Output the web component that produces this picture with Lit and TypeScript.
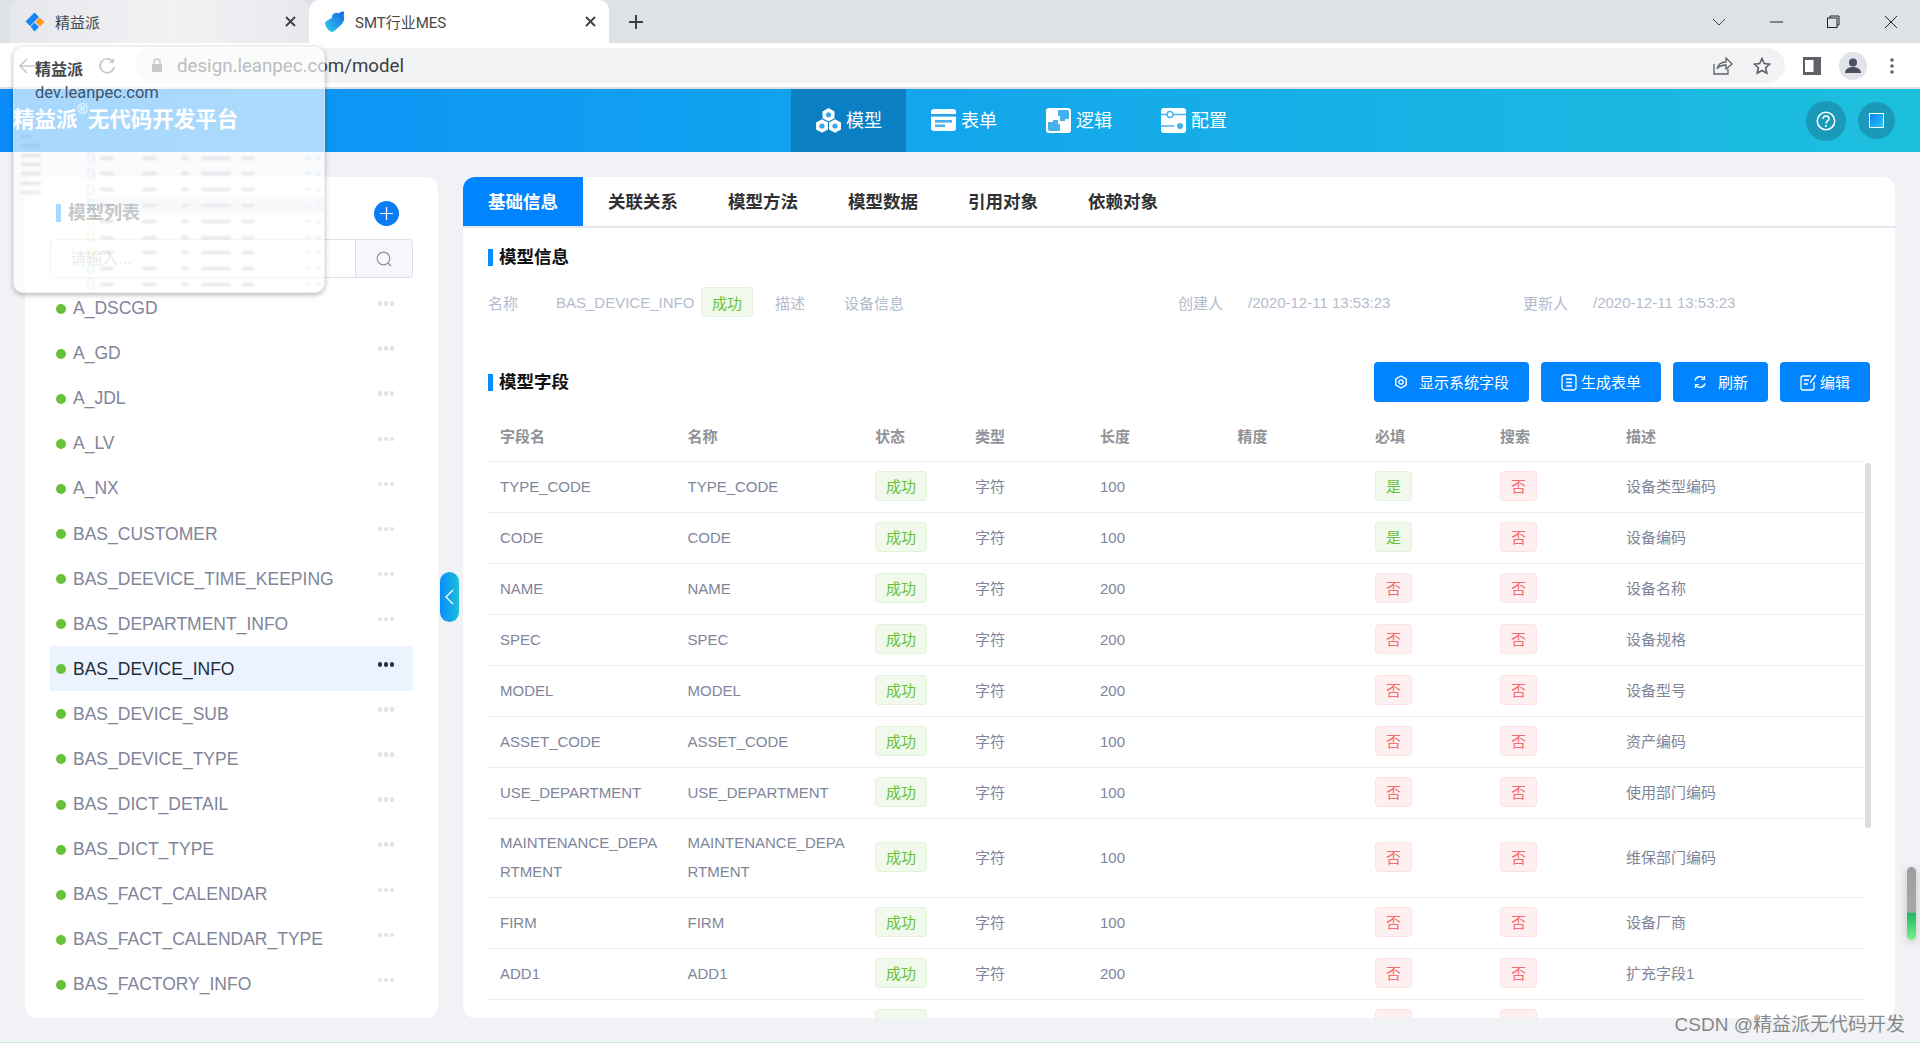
import { LitElement, html, css, svg } from "lit";
import { customElement } from "lit/decorators.js";

const MODELS = ["A_DSCGD","A_GD","A_JDL","A_LV","A_NX","BAS_CUSTOMER","BAS_DEEVICE_TIME_KEEPING","BAS_DEPARTMENT_INFO","BAS_DEVICE_INFO","BAS_DEVICE_SUB","BAS_DEVICE_TYPE","BAS_DICT_DETAIL","BAS_DICT_TYPE","BAS_FACT_CALENDAR","BAS_FACT_CALENDAR_TYPE","BAS_FACTORY_INFO"];
const SELECTED = "BAS_DEVICE_INFO";
const TABS = ["基础信息","关联关系","模型方法","模型数据","引用对象","依赖对象"];
const COLS = ["字段名","名称","状态","类型","长度","精度","必填","搜索","描述"];
type Row = [string, string, string, boolean, string];
const ROWS: Row[] = [
  ["TYPE_CODE","TYPE_CODE","100",true,"设备类型编码"],
  ["CODE","CODE","100",true,"设备编码"],
  ["NAME","NAME","200",false,"设备名称"],
  ["SPEC","SPEC","200",false,"设备规格"],
  ["MODEL","MODEL","200",false,"设备型号"],
  ["ASSET_CODE","ASSET_CODE","100",false,"资产编码"],
  ["USE_DEPARTMENT","USE_DEPARTMENT","100",false,"使用部门编码"],
  ["MAINTENANCE_DEPARTMENT","MAINTENANCE_DEPARTMENT","100",false,"维保部门编码"],
  ["FIRM","FIRM","100",false,"设备厂商"],
  ["ADD1","ADD1","200",false,"扩充字段1"],
];
const THUMB_ICONS = ["#8f7fd8","#7a86c8","#4a90d9","#43c6c0","#f0b050","#f0a030","#f0a030","#5ab0e8","#b060c8"];

const navIcons = [
  svg`<path d="M12.5 0l6 3.4v6.8l-6 3.4-6-3.4V3.4z" fill="#fff"/><circle cx="12.5" cy="6.8" r="2.6" fill="#3ba7ea"/><path d="M6 11.2l6 3.4v6.8L6 24.8l-6-3.4v-6.8z" fill="#fff"/><circle cx="6" cy="18" r="2.6" fill="#3ba7ea"/><path d="M19 11.2l6 3.4v6.8l-6 3.4-6-3.4v-6.8z" fill="#fff"/><circle cx="19" cy="18" r="2.6" fill="#3ba7ea"/>`,
  svg`<rect x="0" y="1" width="25" height="22" rx="3" fill="#fff"/><rect x="0" y="6" width="25" height="2.6" fill="#2ba3ea"/><rect x="4" y="12" width="17" height="2.6" fill="#45b2ef"/><rect x="4" y="16.5" width="10" height="2.6" fill="#45b2ef"/>`,
  svg`<rect x="0" y="0" width="25" height="25" rx="3" fill="#fff"/><path d="M12 2h9a2 2 0 0 1 2 2v7h-4v2h-5V8h-2z" fill="#45b2ef"/><path d="M2 14h5v-2h5v4h2v7H4a2 2 0 0 1-2-2z" fill="#45b2ef"/>`,
  svg`<rect x="0" y="0" width="25" height="25" rx="3" fill="#fff"/><path d="M0 6.500h6M12 6.500h13M0 18h13.500" stroke="#45b2ef" stroke-width="1.4" fill="none"/><circle cx="9" cy="6.500" r="3" fill="#fff" stroke="#45b2ef" stroke-width="1.4"/><circle cx="19" cy="18" r="3" fill="#45b2ef"/>`,
];
const NAV = ["模型","表单","逻辑","配置"];

@customElement("app-root")
export class AppRoot extends LitElement {
  static styles = css`
    :host { display: block; width: 1920px; height: 1043px; position: relative; overflow: hidden; background: #f0f2f5; font-family: "Liberation Sans", "Noto Sans CJK SC", sans-serif; }
    * { box-sizing: border-box; }
    svg { display: block; flex: none; }

    .tabstrip { height: 43px; background: #dee1e6; display: flex; align-items: flex-end; padding-left: 10px; position: relative; }
    .ctab { width: 300px; height: 43px; display: flex; align-items: center; padding: 0 13px 0 15px; font-family: "Roboto", "Noto Sans CJK SC", sans-serif; font-size: 15px; color: #45474b; border-radius: 10px 10px 0 0; }
    .ctab.off { width: 299px; background: linear-gradient(90deg,#e6e8eb,#f1f2f4 55%,#e7e9ec); }
    .ctab.on { background: #fff; }
    .ctab .fav { margin-right: 10px; }
    .ctab .ttl { flex: 1; }
    .newtab { margin-left: 19px; align-self: center; }
    .winctl { margin-left: auto; display: flex; align-items: center; height: 43px; padding-right: 22px; }
    .winctl svg { margin-left: 44px; }

    .toolbar { height: 46px; background: #fff; border-bottom: 2px solid #dedfe1; display: flex; align-items: flex-start; padding-top: 5px; }
    .navbtns { width: 135px; display: flex; align-items: center; height: 35px; padding-left: 19px; }
    .navbtns svg:nth-child(2) { margin-left: 32px; }
    .navbtns svg:nth-child(3) { margin-left: 15px; }
    .omni { width: 1650px; height: 35px; background: #f1f3f4; border-radius: 18px; display: flex; align-items: center; padding-left: 16px; }
    .url { margin-left: 14px; font-family: "Roboto", sans-serif; font-size: 18.700px; color: #3c4043; flex: 1; white-space: nowrap; }
    .omni .share { margin-right: 20px; }
    .omni .star { margin-right: 14px; }
    .tbright { display: flex; align-items: center; height: 35px; padding-left: 18px; }
    .tbright .avatar { width: 28px; height: 28px; border-radius: 50%; background: #e1e3e8; display: flex; align-items: center; justify-content: center; margin: 0 23px 0 18px; }

    .topbar { height: 63px; background: linear-gradient(90deg,#0a8dfb,#1dbfdd); display: grid; grid-template-columns: 791px auto 1fr; align-items: stretch; color: #fff; }
    .brand { padding: 0 0 6px 13px; font-size: 21.500px; font-weight: 700; display: flex; align-items: center; white-space: nowrap; }
    .brand sup { font-size: 14px; font-weight: 400; line-height: 1; align-self: flex-start; margin-top: 13px; }
    .mainnav { display: flex; }
    .navitem { width: 115px; display: flex; align-items: center; padding-left: 25px; gap: 5px; font-size: 18px; }
    .navitem span { margin-top: -4px; }
    .navitem.on { background: #0a80c2; }
    .topright { display: flex; align-items: center; justify-content: flex-end; padding-right: 25px; gap: 12px; }
    .round { border-radius: 50%; background: #1a9ab8; display: flex; align-items: center; justify-content: center; }
    .round.a { width: 40px; height: 40px; }
    .round.b { width: 37px; height: 37px; }
    .sq { width: 15px; height: 15px; border: 1px solid #fff; background: linear-gradient(135deg,#0a7ffb,#2ac8f0); }

    .main { height: 891px; display: flex; padding: 25px; }
    .left { width: 413px; background: #fff; border-radius: 12px; padding: 23px 25px 0; overflow: hidden; }
    .lhead { display: flex; align-items: center; justify-content: space-between; height: 26px; margin-bottom: 13px; padding: 0 14px 0 6px; }
    .ltitle { font-size: 18px; font-weight: 700; color: #5b6068; border-left: 5px solid #0a8dfb; padding-left: 7px; line-height: 18px; }
    .plus { width: 25px; height: 25px; border-radius: 50%; background: #0a7cf5; display: flex; align-items: center; justify-content: center; }
    .search { height: 39px; display: flex; border: 1px solid #dcdfe6; border-radius: 4px; margin-bottom: 7px; }
    .search .ph { flex: 1; font-size: 16px; color: #c0c4cc; padding-left: 19px; line-height: 37px; }
    .search .btn { width: 57px; background: #f5f7fa; border-left: 1px solid #dcdfe6; display: flex; align-items: center; justify-content: center; border-radius: 0 4px 4px 0; }
    .mitem { height: 45.100px; display: flex; align-items: center; padding: 2px 0 0 6px; font-size: 17.500px; color: #80859a; }
    .mitem.on { background: #ebf3fe; color: #1f2d3d; }
    .dot { width: 10px; height: 10px; border-radius: 50%; background: #67c23a; margin-right: 7px; }
    .mtext { flex: 1; }
    .more { display: flex; gap: 1.500px; padding-right: 19px; margin-top: -10px; }
    .more i { width: 4.500px; height: 4.500px; border-radius: 50%; background: #dfe2e8; display: block; }
    .mitem.on .more i { background: #2a2f3a; }

    .gutter { width: 25px; display: flex; align-items: center; justify-content: center; padding-right: 2px; flex: none; }
    .handle { width: 19px; height: 50px; margin-top: -1px; border-radius: 10px; background: linear-gradient(90deg,#0a8dfb,#1dbfdd); display: flex; align-items: center; justify-content: center; }

    .right { width: 1432px; background: #fff; border-radius: 12px; overflow: hidden; display: flex; flex-direction: column; }
    .tabs { display: flex; height: 51px; border-bottom: 2px solid #e4e7ed; flex: none; }
    .tab { width: 120px; height: 49px; padding-bottom: 2px; display: flex; align-items: center; justify-content: center; font-size: 17.500px; font-weight: 700; color: #303133; }
    .tab.on { background: #0084ff; color: #fff; }
    .sect { font-size: 17.500px; font-weight: 700; color: #111; border-left: 5px solid #0a8dfb; padding-left: 6px; line-height: 17px; }
    .sect1 { margin: 21px 0 0 25px; }
    .info { display: grid; grid-template-columns: 68px 145px 74px 69px 334px 70px 275px 70px auto; align-items: center; height: 30px; margin: 21px 0 0 25px; font-size: 15px; color: #b4bccc; }
    .tag { display: inline-flex; height: 30px; padding: 0 10px; align-items: center; justify-content: center; border-radius: 4px; border: 1px solid #e1f3d8; background: #f0f9eb; color: #67c23a; font-size: 15px; }
    .tag.n { border-color: #fde2e2; background: #fef0f0; color: #f56c6c; }
    .tag.blank { width: 52px; }
    .tag.n.blank { width: 37px; }
    .fhead { display: flex; align-items: center; justify-content: space-between; height: 40px; margin: 45px 25px 0 25px; }
    .btns { display: flex; gap: 12px; }
    .pbtn { height: 40px; padding: 0 20px 2px; background: #0084ff; color: #fff; border-radius: 4px; display: flex; align-items: center; font-size: 15px; }
    .pbtn svg { margin-top: 2px; }
    .g11 { gap: 11px; } .g4 { gap: 4px; } .g3 { gap: 3px; }
    .tblwrap { position: relative; margin: 9px 31px 0 25px; flex: 1; min-height: 0; }
    .tblclip { height: 100%; overflow: hidden; }
    table { border-collapse: separate; border-spacing: 0; table-layout: fixed; width: 1376px; font-size: 15px; color: #80859a; }
    th { height: 51px; text-align: left; font-weight: 700; color: #909399; padding: 0 12px 1px; border-bottom: 1px solid #ebeef5; }
    td { padding: 9px 12px 11px; line-height: 29px; border-bottom: 1px solid #ebeef5; word-break: break-all; vertical-align: middle; }
    td .tag { display: flex; width: fit-content; }
    .vbar { position: absolute; right: -7px; top: 52px; width: 6px; height: 365px; border-radius: 3px; background: #dcdde0; }

    .popup { position: absolute; left: 13px; top: 46px; width: 312px; height: 247px; border-radius: 10px; background: rgba(255,255,255,.65); border: 1px solid rgba(225,228,232,.7); box-shadow: 0 2px 5px rgba(0,0,0,.28); overflow: hidden; padding: 11px 21px; }
    .ptitle { font-size: 16px; font-weight: 700; color: #45474b; line-height: 24px; position: relative; }
    .psub { font-family: "Roboto", sans-serif; font-size: 16.500px; color: #3f526c; line-height: 22px; position: relative; }
    .thumb { position: absolute; left: 0; right: 0; top: 84px; bottom: 0; filter: blur(1px); opacity: .2; }
    .throw { position: absolute; left: 72px; right: 0; height: 16px; display: flex; align-items: center; }
    .throw.hl { background: rgba(170,180,200,.35); }
    .throw i { position: absolute; height: 3px; background: #8a92a0; display: block; }
    .throw b { position: absolute; left: 1px; width: 7px; height: 10px; border: 1.500px solid; border-radius: 2px; display: block; }
    .thside { position: absolute; left: 7px; height: 3px; background: #8a92a0; }

    .pagebar { position: absolute; left: 1907px; top: 867px; width: 9px; height: 73px; border-radius: 5px; background: linear-gradient(180deg,#9d9d9d 0,#a8a8a8 62%,#1fb863 63%,#7cf08c 100%); box-shadow: 0 2px 8px rgba(0,0,0,.2); }
    .wm { position: absolute; right: 15px; top: 1009px; font-size: 19px; color: rgba(90,90,90,.72); white-space: nowrap; }
    .bline { position: absolute; left: 0; right: 0; bottom: 0; height: 1px; background: #c0efe0; }
  `;

  render() {
    return html`
      <div class="tabstrip">
        <div class="ctab off"><span class="fav"><svg width="20" height="20" viewBox="0 0 20 20"><path d="M9.500.5L14 5l-9 9-4.500-4.500z" fill="#1685f8"/><path d="M14.500 5.500L19.500 10 15 14.500 10.500 10z" fill="#ff9a1f"/><path d="M5.500 14.500l4-4 4.500 4.500-4.500 4.500z" fill="#1685f8"/></svg></span><span class="ttl">精益派</span>${this.x()}</div>
        <div class="ctab on"><span class="fav"><svg width="21" height="21" viewBox="0 0 21 21"><defs><linearGradient id="pz" x1="0" y1="1" x2="1" y2="0"><stop offset="0" stop-color="#33d0e8"/><stop offset="1" stop-color="#1264e8"/></linearGradient></defs><path d="M1 12c2-3 5-4 7-5 0-2 0-4 3-5 2-1 2 1 4 0s4-2 5-1c1 2-1 3 0 5s-1 6-3 8c-3 3-6 5-8 7-3 0-7-3-8-9z" fill="url(#pz)"/></svg></span><span class="ttl">SMT行业MES</span>${this.x()}</div>
        <svg class="newtab" width="16" height="16" viewBox="0 0 16 16"><path d="M8 1v14M1 8h14" stroke="#3c4043" stroke-width="2"/></svg>
        <div class="winctl">
          <svg width="14" height="8" viewBox="0 0 14 8"><path d="M1 1l6 6 6-6" fill="none" stroke="#45474b"/></svg>
          <svg width="13" height="2" viewBox="0 0 13 2"><path d="M0 1h13" stroke="#222" stroke-width="1"/></svg>
          <svg width="13" height="13" viewBox="0 0 13 13"><path d="M3 3V1h9v9h-2" fill="none" stroke="#222"/><rect x=".5" y="3" width="9.500" height="9.500" fill="none" stroke="#222"/></svg>
          <svg width="14" height="14" viewBox="0 0 14 14"><path d="M1 1l12 12M13 1L1 13" stroke="#222"/></svg>
        </div>
      </div>
      <div class="toolbar">
        <div class="navbtns">
          <svg width="18" height="16" viewBox="0 0 18 16"><path d="M8 1L1 8l7 7M1 8h16" fill="none" stroke="#5f6368" stroke-width="1.7"/></svg>
          <svg width="14" height="16" viewBox="0 0 14 16"><path d="M6 1l7 7-7 7" fill="none" stroke="#b0b3b8" stroke-width="1.7"/></svg>
          <svg width="18" height="18" viewBox="0 0 18 18"><path d="M15 5a7 7 0 1 0 1 5" fill="none" stroke="#5f6368" stroke-width="1.7"/><path d="M16 1v5h-5z" fill="#5f6368"/></svg>
        </div>
        <div class="omni">
          <svg width="12" height="15" viewBox="0 0 12 15"><path d="M3 6V4a3 3 0 0 1 6 0v2" fill="none" stroke="#5f6368" stroke-width="1.4"/><rect x="1" y="6" width="10" height="8" rx="1" fill="#5f6368"/></svg>
          <span class="url">design.leanpec.com/model</span>
          <svg class="share" width="20" height="19" viewBox="0 0 20 19"><path d="M1 8v10h14v-5M4 13c1-5 5-7 9-7V2l6 6-6 5V9c-4 0-7 1-9 4z" fill="none" stroke="#5f6368" stroke-width="1.3"/></svg>
          <svg class="star" width="18" height="18" viewBox="0 0 18 18"><path d="M9 1.500l2.300 5 5.400.6-4 3.600 1.100 5.400L9 13.400l-4.800 2.700 1.100-5.400-4-3.600 5.400-.6z" fill="none" stroke="#5f6368" stroke-width="1.7"/></svg>
        </div>
        <div class="tbright">
          <svg width="18" height="18" viewBox="0 0 18 18"><rect width="18" height="18" fill="#5f6368"/><rect x="2" y="3" width="8.500" height="12" fill="#fff"/></svg>
          <span class="avatar"><svg width="16" height="16" viewBox="0 0 16 16"><circle cx="8" cy="4.500" r="4" fill="#4a5060"/><path d="M0 15c0-4 4-6 8-6s8 2 8 6z" fill="#4a5060"/></svg></span>
          <svg width="4" height="16" viewBox="0 0 4 16"><circle cx="2" cy="2" r="1.800" fill="#5f6368"/><circle cx="2" cy="8" r="1.800" fill="#5f6368"/><circle cx="2" cy="14" r="1.800" fill="#5f6368"/></svg>
        </div>
      </div>
      <div class="topbar">
        <div class="brand">精益派<sup>®</sup>无代码开发平台</div>
        <div class="mainnav">
          ${NAV.map((n, i) => html`<div class="navitem ${i === 0 ? "on" : ""}"><svg width="25" height="25" viewBox="0 0 25 25">${navIcons[i]}</svg><span>${n}</span></div>`)}
        </div>
        <div class="topright">
          <div class="round a"><svg width="20" height="20" viewBox="0 0 20 20"><circle cx="10" cy="10" r="8.700" fill="none" stroke="#fff" stroke-width="1.5"/><path d="M7 8c0-4 6-4 6 0 0 2-3 2-3 4.500" fill="none" stroke="#fff" stroke-width="1.5"/><circle cx="10" cy="15" r="1" fill="#fff"/></svg></div>
          <div class="round b"><span class="sq"></span></div>
        </div>
      </div>
      <div class="main">
        <div class="left">
          <div class="lhead"><span class="ltitle">模型列表</span><span class="plus"><svg width="13" height="13" viewBox="0 0 13 13"><path d="M6.500 0v13M0 6.500h13" stroke="#fff" stroke-width="1.2"/></svg></span></div>
          <div class="search"><span class="ph">请输入...</span><span class="btn"><svg width="16" height="16" viewBox="0 0 16 16"><circle cx="7.500" cy="7.500" r="6.300" fill="none" stroke="#909399" stroke-width="1.2"/><path d="M12 12l3 3" stroke="#909399" stroke-width="1.2"/></svg></span></div>
          ${MODELS.map((m) => html`<div class="mitem ${m === SELECTED ? "on" : ""}"><span class="dot"></span><span class="mtext">${m}</span><span class="more"><i></i><i></i><i></i></span></div>`)}
        </div>
        <div class="gutter"><div class="handle"><svg width="9" height="16" viewBox="0 0 9 16"><path d="M8 1L1 8l7 7" fill="none" stroke="#fff" stroke-width="1.3"/></svg></div></div>
        <div class="right">
          <div class="tabs">${TABS.map((t, i) => html`<div class="tab ${i === 0 ? "on" : ""}">${t}</div>`)}</div>
          <div class="sect sect1">模型信息</div>
          <div class="info">
            <span>名称</span><span>BAS_DEVICE_INFO</span><span><span class="tag">成功</span></span><span>描述</span><span>设备信息</span><span>创建人</span><span>/2020-12-11 13:53:23</span><span>更新人</span><span>/2020-12-11 13:53:23</span>
          </div>
          <div class="fhead">
            <div class="sect">模型字段</div>
            <div class="btns">
              <div class="pbtn g11"><svg width="14" height="14" viewBox="0 0 14 14"><path d="M7 1l5.200 3v6L7 13l-5.200-3V4z" fill="none" stroke="#fff" stroke-width="1.4"/><circle cx="7" cy="7" r="2.200" fill="none" stroke="#fff" stroke-width="1.3"/></svg>显示系统字段</div>
              <div class="pbtn g4"><svg width="16" height="17" viewBox="0 0 16 17"><rect x="1" y="1" width="14" height="15" rx="2.500" fill="none" stroke="#fff" stroke-width="1.3"/><path d="M5 5h6M5 8.500h6M5 12h6" stroke="#fff" stroke-width="1.3"/></svg>生成表单</div>
              <div class="pbtn g11"><svg width="14" height="14" viewBox="0 0 14 14"><path d="M2 5.500A5.200 5.200 0 0 1 11 3.500M12 8.500A5.200 5.200 0 0 1 3 10.500" fill="none" stroke="#fff" stroke-width="1.4"/><path d="M11.500 1v3.500H8M2.500 13V9.500H6" fill="none" stroke="#fff" stroke-width="1.2"/></svg>刷新</div>
              <div class="pbtn g3"><svg width="17" height="17" viewBox="0 0 17 17"><path d="M11 2H3a2 2 0 0 0-2 2v10a2 2 0 0 0 2 2h9a2 2 0 0 0 2-2V8" fill="none" stroke="#fff" stroke-width="1.3"/><path d="M4 6h5M4 10h4M10 9l6-8" fill="none" stroke="#fff" stroke-width="1.3"/></svg>编辑</div>
            </div>
          </div>
          <div class="tblwrap">
            <div class="tblclip">
              <table>
                <colgroup><col style="width:187.5px"><col style="width:187.5px"><col style="width:100px"><col style="width:125px"><col style="width:137.5px"><col style="width:137.5px"><col style="width:125px"><col style="width:126px"><col></colgroup>
                <thead><tr>${COLS.map((c) => html`<th>${c}</th>`)}</tr></thead>
                <tbody>
                  ${ROWS.map((r) => html`<tr><td>${r[0]}</td><td>${r[1]}</td><td><span class="tag">成功</span></td><td>字符</td><td>${r[2]}</td><td></td><td><span class="tag ${r[3] ? "y" : "n"}">${r[3] ? "是" : "否"}</span></td><td><span class="tag n">否</span></td><td>${r[4]}</td></tr>`)}
                  <tr><td></td><td></td><td><span class="tag blank"></span></td><td></td><td></td><td></td><td><span class="tag n blank"></span></td><td><span class="tag n blank"></span></td><td></td></tr>
                </tbody>
              </table>
            </div>
            <div class="vbar"></div>
          </div>
        </div>
      </div>

      <div class="popup">
        <div class="thumb">
          ${[0, 1, 2, 3, 4, 5, 6].map((i) => html`<span class="thside" style="top:${4 + i * 9.3}px;width:${i === 0 ? 10 : 20}px"></span>`)}
          ${THUMB_ICONS.map((c, i) => html`<div class="throw ${i === 3 ? "hl" : ""}" style="top:${19 + i * 15.8}px"><b style="border-color:${c}"></b><i style="left:14px;width:14px"></i><i style="left:56px;width:15px"></i><i style="left:95px;width:8px"></i><i style="left:115px;width:30px"></i><i style="left:156px;width:12px"></i><i style="left:219px;width:6px;background:#a9c4ea"></i><i style="left:230px;width:5px;background:#a9c4ea"></i></div>`)}
        </div>
        <div class="ptitle">精益派</div>
        <div class="psub">dev.leanpec.com</div>
      </div>
      <div class="pagebar"></div>
      <div class="wm">CSDN @精益派无代码开发</div>
      <div class="bline"></div>
    `;
  }

  private x() {
    return html`<svg width="11" height="11" viewBox="0 0 11 11"><path d="M1 1l9 9M10 1l-9 9" stroke="#3c4043" stroke-width="1.8"/></svg>`;
  }
}
